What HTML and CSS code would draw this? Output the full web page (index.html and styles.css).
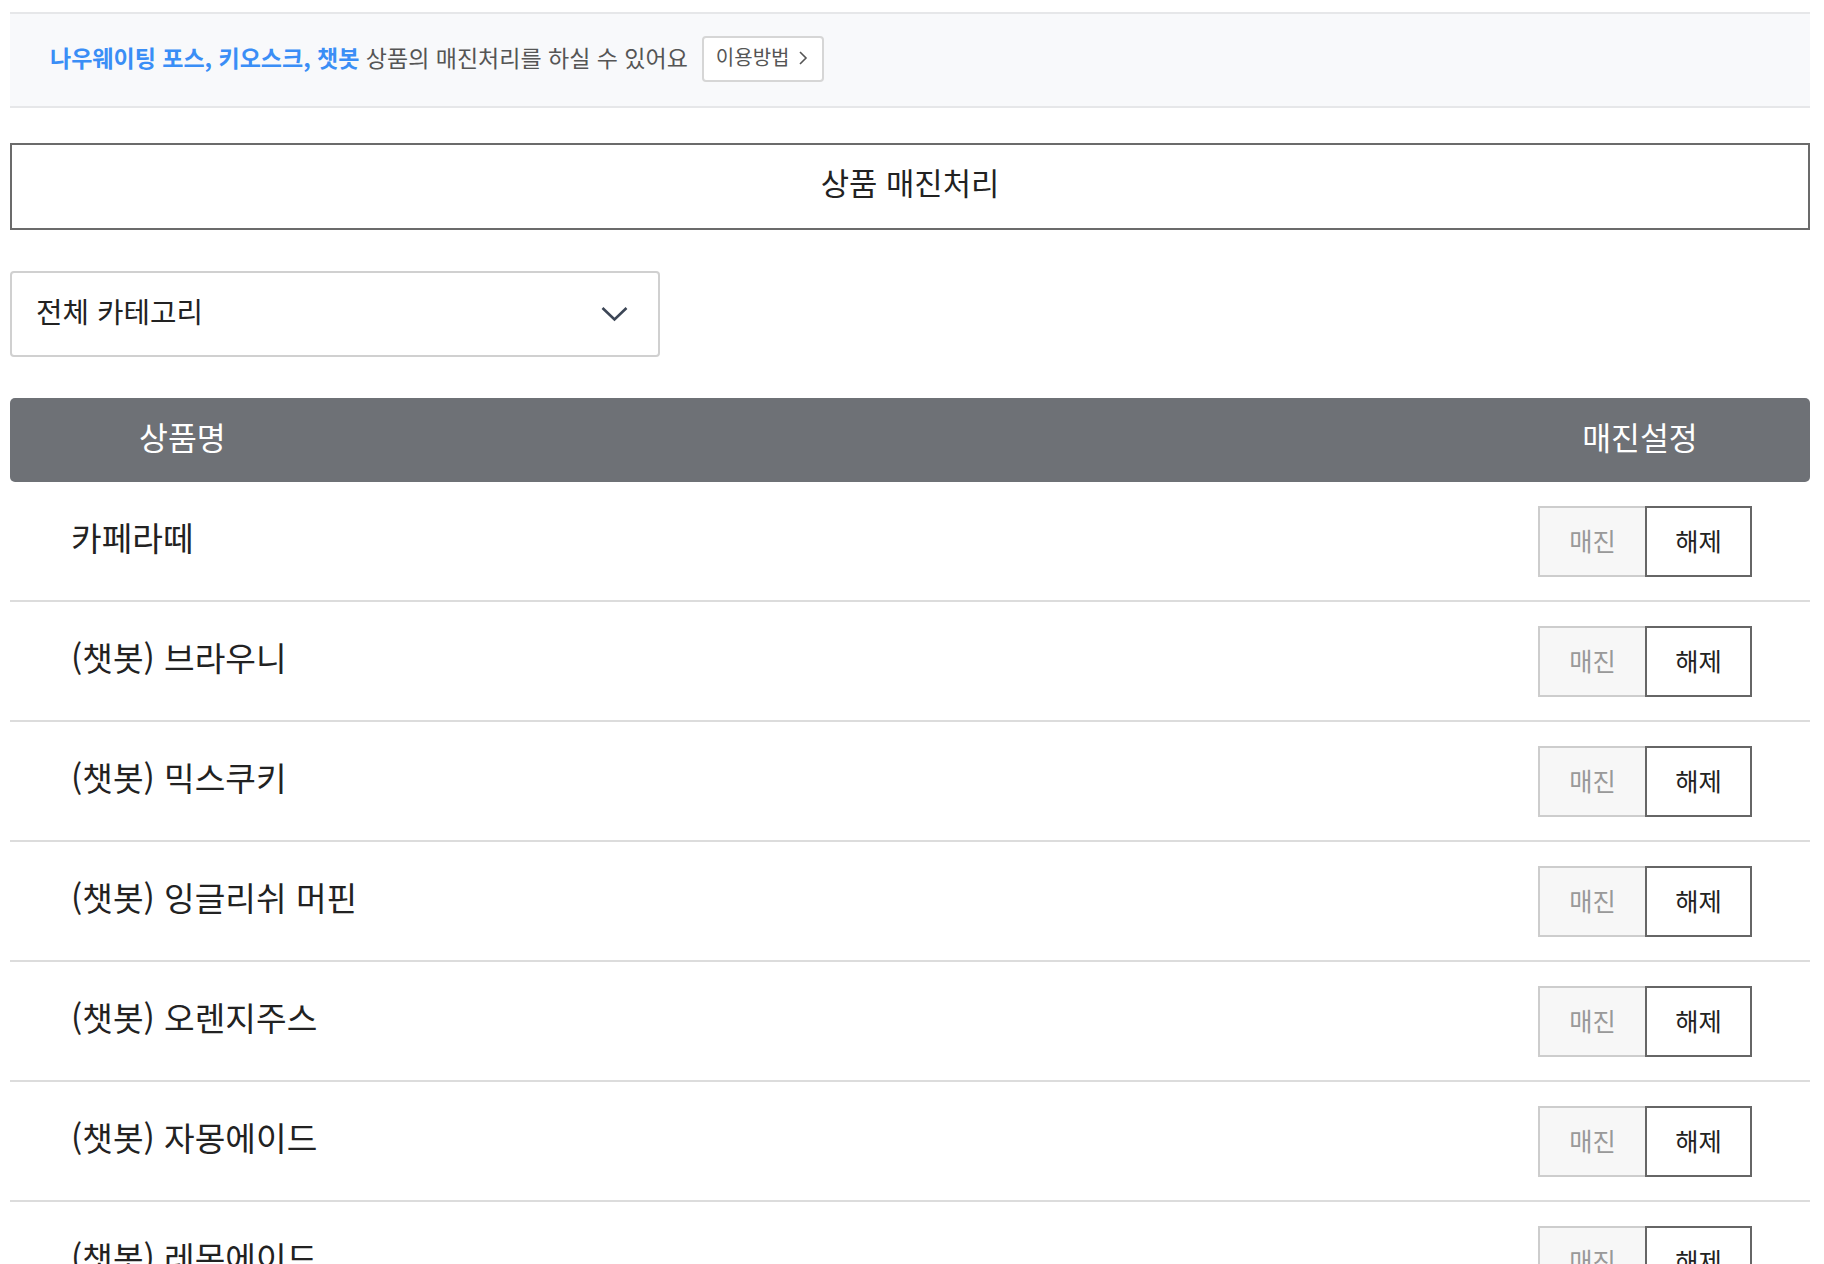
FILE: index.html
```html
<!DOCTYPE html>
<html lang="ko">
<head>
    <meta charset="utf-8">
    <title>상품 매진처리</title>
    <link rel="stylesheet" href="styles.css">
</head>
<body>
    <div class="page">
        <div class="notice">
            <p class="notice-text"><strong>나우웨이팅 포스, 키오스크, 챗봇</strong> 상품의 매진처리를 하실 수 있어요</p>
            <button class="guide-button">
                <span class="guide-label">이용방법</span>
                <svg class="guide-arrow" width="10" height="16" viewBox="0 0 10 16">
                    <path d="M2 2 L8 8 L2 14" fill="none" stroke="#555" stroke-width="1.6"/>
                </svg>
            </button>
        </div>

        <div class="title-box"><h1>상품 매진처리</h1></div>

        <div class="category-select">
            <span class="select-label">전체 카테고리</span>
            <svg class="select-arrow" width="27" height="16" viewBox="0 0 27 16">
                <path d="M1.5 2 L13.5 13.5 L25.5 2" fill="none" stroke="#3c4656" stroke-width="2.6"/>
            </svg>
        </div>

        <div class="product-table">
            <div class="table-head">
                <div class="col-name">상품명</div>
                <div class="col-setting">매진설정</div>
            </div>

            <div class="product-row">
                <div class="product-name">카페라떼</div>
                <div class="soldout-toggle">
                    <button class="soldout-btn">매진</button>
                    <button class="release-btn">해제</button>
                </div>
            </div>
            <div class="product-row">
                <div class="product-name">(챗봇) 브라우니</div>
                <div class="soldout-toggle">
                    <button class="soldout-btn">매진</button>
                    <button class="release-btn">해제</button>
                </div>
            </div>
            <div class="product-row">
                <div class="product-name">(챗봇) 믹스쿠키</div>
                <div class="soldout-toggle">
                    <button class="soldout-btn">매진</button>
                    <button class="release-btn">해제</button>
                </div>
            </div>
            <div class="product-row">
                <div class="product-name">(챗봇) 잉글리쉬 머핀</div>
                <div class="soldout-toggle">
                    <button class="soldout-btn">매진</button>
                    <button class="release-btn">해제</button>
                </div>
            </div>
            <div class="product-row">
                <div class="product-name">(챗봇) 오렌지주스</div>
                <div class="soldout-toggle">
                    <button class="soldout-btn">매진</button>
                    <button class="release-btn">해제</button>
                </div>
            </div>
            <div class="product-row">
                <div class="product-name">(챗봇) 자몽에이드</div>
                <div class="soldout-toggle">
                    <button class="soldout-btn">매진</button>
                    <button class="release-btn">해제</button>
                </div>
            </div>
            <div class="product-row">
                <div class="product-name">(챗봇) 레몬에이드</div>
                <div class="soldout-toggle">
                    <button class="soldout-btn">매진</button>
                    <button class="release-btn">해제</button>
                </div>
            </div>
        </div>
    </div>
</body>
</html>
```

FILE: styles.css
```css
* {
    box-sizing: border-box;
}

body {
    margin: 0;
    background: #fff;
    font-family: "Noto Sans CJK KR", "Noto Sans", sans-serif;
    color: #222;
}

.page {
    width: 1800px;
    margin: 12px 0 0 10px;
}

.notice {
    display: flex;
    align-items: center;
    height: 96px;
    padding-left: 40px;
    background: #f8f9fb;
    border-top: 2px solid #e6e7e9;
    border-bottom: 2px solid #e6e7e9;
}

.notice-text {
    margin: 0;
    padding-bottom: 7px;
    font-size: 23px;
    color: #555;
    white-space: nowrap;
}

.notice-text strong {
    color: #3a8ef6;
    font-weight: 700;
}

.guide-button {
    display: flex;
    align-items: center;
    height: 46px;
    margin: 0 0 2px 14px;
    padding: 0 14px 0 12px;
    background: #fff;
    border: 2px solid #d6d6d6;
    border-radius: 4px;
    font-family: inherit;
    font-size: 20px;
    color: #555;
}

.guide-label {
    padding-bottom: 5px;
}

.guide-arrow {
    margin: 0 0 2px 9px;
}

.title-box {
    display: flex;
    align-items: center;
    justify-content: center;
    height: 87px;
    margin-top: 35px;
    padding-bottom: 11px;
    border: 2px solid #6b6b6b;
}

.title-box h1 {
    margin: 0;
    font-size: 30.8px;
    font-weight: 400;
    color: #222;
}

.category-select {
    display: flex;
    align-items: center;
    justify-content: space-between;
    width: 650px;
    height: 86px;
    margin-top: 41px;
    padding: 0 30px 0 24px;
    border: 2px solid #d0d0d0;
    border-radius: 4px;
    font-size: 28.8px;
    color: #222;
}

.select-label {
    padding-bottom: 7px;
}

.product-table {
    margin-top: 41px;
}

.table-head {
    display: flex;
    align-items: center;
    justify-content: space-between;
    height: 84px;
    padding: 0 63px 7px 129px;
    background: #6e7176;
    border-radius: 5px;
    color: #fff;
    font-size: 31.4px;
}

.col-setting {
    width: 214px;
    text-align: center;
}

.product-row {
    display: flex;
    align-items: center;
    justify-content: space-between;
    height: 120px;
    padding: 0 58px 0 61px;
    border-bottom: 2px solid #dcdcdc;
}

.product-name {
    padding-bottom: 9px;
    font-size: 33.3px;
    color: #222;
}

.soldout-toggle {
    display: flex;
}

.soldout-toggle button {
    height: 71px;
    padding: 0 0 2px;
    font-family: inherit;
    font-size: 25.3px;
}

.soldout-btn {
    width: 107px;
    background: #f7f7f7;
    border: 2px solid #cdcdcd;
    border-right: none;
    color: #999;
}

.release-btn {
    width: 107px;
    background: #fff;
    border: 2px solid #666;
    color: #222;
}
```
